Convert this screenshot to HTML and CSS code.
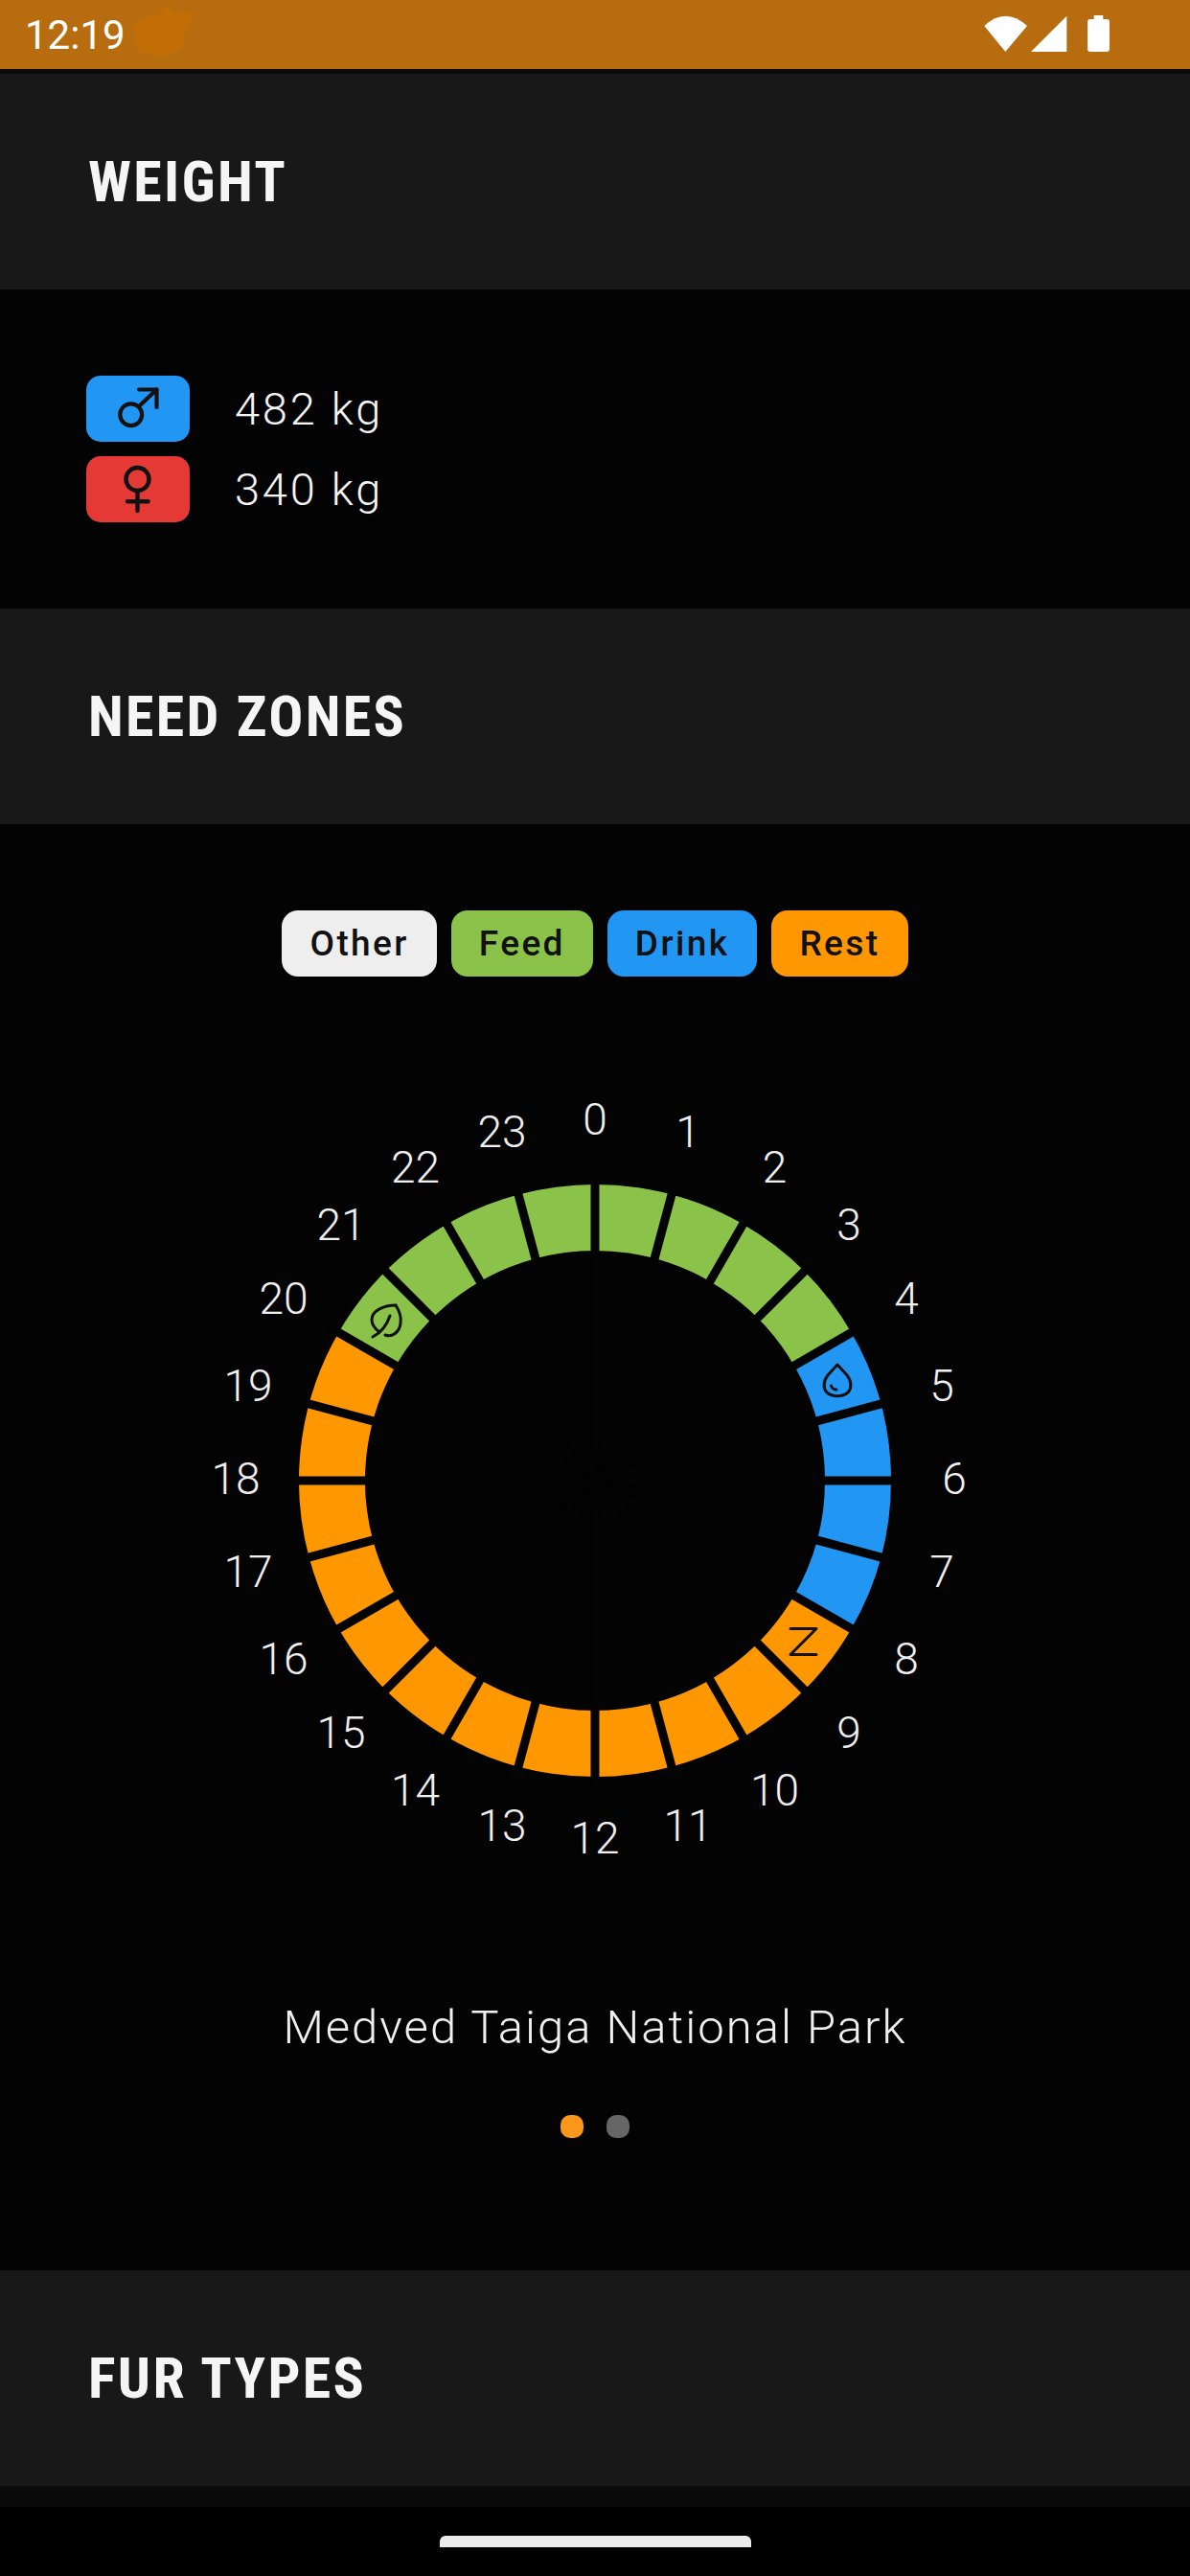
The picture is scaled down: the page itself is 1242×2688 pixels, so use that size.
FILE: index.html
```html
<!DOCTYPE html>
<html lang="en">
<head>
    <meta charset="UTF-8">
    <meta name="viewport" content="width=device-width, initial-scale=1.0">
    <title>Bear</title>
    <link rel="stylesheet" href="styles.css">
</head>
<body>
    <div class="status-bar">
        <span class="status-time">12:19</span>
        <svg class="status-blob" width="72" height="72" viewBox="0 0 72 72">
            <path d="M3 22 L29 14 L42 2 L43 12 L70 15 L59 28 L54 50 L34 60 L9 55 L4 40 Z" fill="#c06e05"/>
        </svg>
        <svg class="status-icons" width="131" height="72" viewBox="0 0 131 72" fill="#fff">
            <path d="M0.3 27 Q22.3 6.5 45 27 L22.3 54 Z"/>
            <path d="M49 54 L86.3 16.7 V54 Z"/>
            <rect x="108" y="20" width="23" height="34" rx="3"/>
            <rect x="114.7" y="16" width="9.6" height="5"/>
        </svg>
    </div>

    <div class="section-head"><h2>WEIGHT</h2></div>
    <div class="weights">
        <div class="weight-row">
            <span class="sex-pill male">
                <svg width="108" height="69" viewBox="0 0 108 69" fill="none" stroke="#111" stroke-width="4.2" stroke-linecap="round" stroke-linejoin="round">
                    <circle cx="46.7" cy="40.7" r="11.4"/>
                    <path d="M55 32 L73.5 14.5"/>
                    <path d="M55 14.5 H73.5 V33"/>
                </svg>
            </span>
            <span class="weight-value">482 kg</span>
        </div>
        <div class="weight-row">
            <span class="sex-pill female">
                <svg width="108" height="69" viewBox="0 0 108 69" fill="none" stroke="#111" stroke-width="4.4" stroke-linecap="round">
                    <circle cx="53.5" cy="24" r="12"/>
                    <path d="M53.5 36 V57"/>
                    <path d="M43 47.3 H64.5"/>
                </svg>
            </span>
            <span class="weight-value">340 kg</span>
        </div>
    </div>

    <div class="section-head"><h2>NEED ZONES</h2></div>
    <div class="zones">
        <div class="legend">
            <span class="legend-item other">Other</span>
            <span class="legend-item feed">Feed</span>
            <span class="legend-item drink">Drink</span>
            <span class="legend-item rest">Rest</span>
        </div>

        <svg class="clock" width="900" height="900" viewBox="0 0 900 900">
            <g fill="none" stroke-width="69">
                <circle class="arc-feed" cx="450" cy="450" r="274.5" pathLength="24" stroke-dasharray="8 16" transform="rotate(210 450 450)"/>
                <circle class="arc-drink" cx="450" cy="450" r="274.5" pathLength="24" stroke-dasharray="4 20" transform="rotate(-30 450 450)"/>
                <circle class="arc-rest" cx="450" cy="450" r="274.5" pathLength="24" stroke-dasharray="12 12" transform="rotate(30 450 450)"/>
            </g>
            <!-- hour gaps -->
            <g class="gaps">
                <line x1="450" y1="130" x2="450" y2="770"/>
                <line x1="450" y1="130" x2="450" y2="770" transform="rotate(15 450 450)"/>
                <line x1="450" y1="130" x2="450" y2="770" transform="rotate(30 450 450)"/>
                <line x1="450" y1="130" x2="450" y2="770" transform="rotate(45 450 450)"/>
                <line x1="450" y1="130" x2="450" y2="770" transform="rotate(60 450 450)"/>
                <line x1="450" y1="130" x2="450" y2="770" transform="rotate(75 450 450)"/>
                <line x1="450" y1="130" x2="450" y2="770" transform="rotate(90 450 450)"/>
                <line x1="450" y1="130" x2="450" y2="770" transform="rotate(105 450 450)"/>
                <line x1="450" y1="130" x2="450" y2="770" transform="rotate(120 450 450)"/>
                <line x1="450" y1="130" x2="450" y2="770" transform="rotate(135 450 450)"/>
                <line x1="450" y1="130" x2="450" y2="770" transform="rotate(150 450 450)"/>
                <line x1="450" y1="130" x2="450" y2="770" transform="rotate(165 450 450)"/>
            </g>
            <!-- icons on the first hour of each zone -->
            <g class="zone-icons">
                <path d="M242 267 C229 267 217 273 217 282 C217 288 221 292 225 295"/>
                <path d="M242 267 C246 273 248 280 247 286 C246 295 238 301 231 298"/>
                <path d="M218 300 C226 296 232 290 236 278"/>
                <path d="M703 329 L693 340 C688 346 688 354 692 358 C698 363 708 363 714 358 C718 354 718 346 713 340 Z"/>
                <path d="M696.5 351 C697 353 699.5 355 702 355"/>
                <path d="M654 604.5 H681 L654 631.5 H681"/>
            </g>
            <g class="hours">
                <text x="450" y="89">0</text>
                <text x="547" y="102">1</text>
                <text x="637.5" y="139">2</text>
                <text x="715" y="199">3</text>
                <text x="775" y="276">4</text>
                <text x="812" y="367">5</text>
                <text x="825" y="464">6</text>
                <text x="812" y="561">7</text>
                <text x="775" y="652">8</text>
                <text x="715" y="729">9</text>
                <text x="637.5" y="789">10</text>
                <text x="547" y="826">11</text>
                <text x="450" y="839">12</text>
                <text x="353" y="826">13</text>
                <text x="262.5" y="789">14</text>
                <text x="185" y="729">15</text>
                <text x="125" y="652">16</text>
                <text x="88" y="561">17</text>
                <text x="75" y="464">18</text>
                <text x="88" y="367">19</text>
                <text x="125" y="276">20</text>
                <text x="185" y="199">21</text>
                <text x="262.5" y="139">22</text>
                <text x="353" y="102">23</text>
            </g>
        </svg>

        <p class="park-name">Medved Taiga National Park</p>
        <div class="dots">
            <span class="dot active"></span>
            <span class="dot"></span>
        </div>
    </div>

    <div class="section-head"><h2>FUR TYPES</h2></div>

    <div class="nav-bar"><span class="nav-handle"></span></div>
</body>
</html>
```

FILE: styles.css
```css
body {
    margin: 0;
    width: 1242px;
    height: 2688px;
    overflow: hidden;
    background-color: #030303;
    font-family: Roboto, "Liberation Sans", sans-serif;
    color: #f5f5f5;
}

.status-bar {
    display: flex;
    align-items: center;
    height: 72px;
    padding: 0 84px 0 26px;
    background-color: #b76c10;
    border-bottom: 5px solid #0a0a0a;
}

.status-time {
    font-size: 42px;
    color: #fff;
    width: 110px;
}

.status-icons {
    margin-left: auto;
}

.section-head {
    display: flex;
    align-items: center;
    height: 225px;
    padding-left: 92px;
    background-color: #181818;
}

.section-head h2 {
    margin: 0;
    font-size: 60px;
    font-weight: 700;
    font-stretch: 80%;
    letter-spacing: 2.3px;
}

.weights {
    display: flex;
    flex-direction: column;
    gap: 15px;
    padding: 90px;
}

.weight-row {
    display: flex;
    align-items: center;
    gap: 47px;
}

.sex-pill {
    display: flex;
    width: 108px;
    height: 69px;
    border-radius: 15px;
}

.male {
    background-color: #2196f3;
}

.female {
    background-color: #e53935;
}

.weight-value {
    font-size: 47px;
    font-weight: 300;
    letter-spacing: 2.8px;
}

.zones {
    display: flex;
    flex-direction: column;
    align-items: center;
    height: 1509px;
}

.legend {
    display: flex;
    gap: 15px;
    margin-top: 90px;
}

.legend-item {
    display: flex;
    align-items: center;
    justify-content: center;
    height: 69px;
    padding: 0 29px;
    border-radius: 17px;
    font-size: 37px;
    font-weight: 500;
    font-stretch: 90%;
    letter-spacing: 2.4px;
    color: #111;
}

.other {
    background-color: #eeeeee;
}

.feed {
    background-color: #8bc34a;
}

.drink {
    background-color: #2196f3;
}

.rest {
    background-color: #ff9800;
}

.clock {
    margin-top: 76px;
}

.arc-feed {
    stroke: #8bc34a;
}

.arc-drink {
    stroke: #2196f3;
}

.arc-rest {
    stroke: #ff9800;
}

.gaps line {
    stroke: #030303;
    stroke-width: 9;
}

.zone-icons path {
    fill: none;
    stroke: #111;
    stroke-width: 3;
    stroke-linecap: round;
    stroke-linejoin: round;
}

.hours text {
    fill: #f0f0f0;
    font-size: 46px;
    font-weight: 300;
    text-anchor: middle;
}

.park-name {
    margin: 92px 0 0;
    font-size: 49px;
    font-weight: 300;
    font-stretch: 90%;
    letter-spacing: 2px;
    color: #f0f0f0;
}

.dots {
    display: flex;
    gap: 24px;
    margin-top: 63px;
}

.dot {
    width: 24px;
    height: 24px;
    border-radius: 10px;
    background-color: #666;
}

.dot.active {
    background-color: #fb981c;
}

.nav-bar {
    display: flex;
    justify-content: center;
    height: 72px;
    border-top: 22px solid #0a0a0a;
    background-color: #000;
}

.nav-handle {
    width: 325px;
    height: 12px;
    margin-top: 30px;
    border-radius: 6px 6px 0 0;
    background-color: #ebebeb;
}
```
